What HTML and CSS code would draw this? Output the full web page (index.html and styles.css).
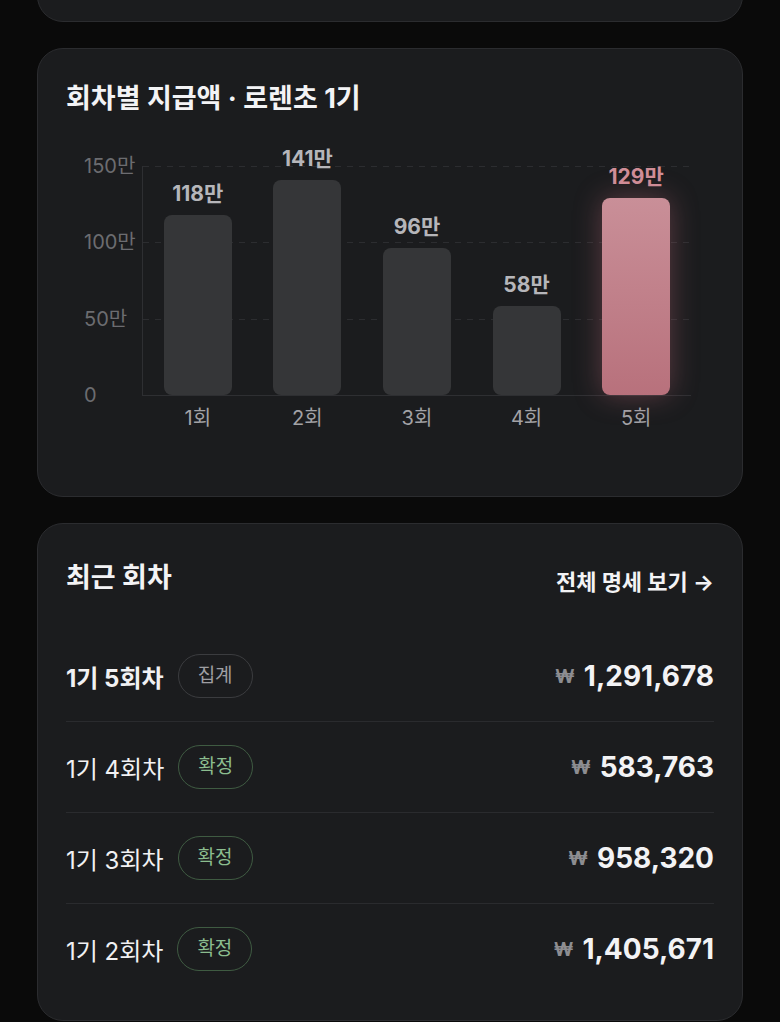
FILE: index.html
```html
<!DOCTYPE html>
<html lang="ko">
<head>
    <meta charset="UTF-8">
    <meta name="viewport" content="width=device-width, initial-scale=1.0">
    <title>정산 요약</title>
    <link rel="stylesheet" href="styles.css">
</head>

<body>
    <div class="page">
        <!-- previous card, scrolled mostly out of view -->
        <div class="card stub"></div>

        <!-- Chart: amount per round -->
        <div class="card chart-card">
            <h2 class="card-title">회차별 지급액 · 로렌초 1기</h2>

            <div class="chart-body">
                <div class="y-axis">
                    <span>150만</span>
                    <span>100만</span>
                    <span>50만</span>
                    <span>0</span>
                </div>
                <div class="plot">
                    <div class="gridline" style="top:0"></div>
                    <div class="gridline" style="top:33.33%"></div>
                    <div class="gridline" style="top:66.67%"></div>

                    <div class="slot">
                        <span class="bar-value">118만</span>
                        <div class="bar" style="height:180px"></div>
                    </div>
                    <div class="slot">
                        <span class="bar-value">141만</span>
                        <div class="bar" style="height:215px"></div>
                    </div>
                    <div class="slot">
                        <span class="bar-value">96만</span>
                        <div class="bar" style="height:147px"></div>
                    </div>
                    <div class="slot">
                        <span class="bar-value">58만</span>
                        <div class="bar" style="height:89px"></div>
                    </div>
                    <div class="slot current">
                        <span class="bar-value">129만</span>
                        <div class="bar" style="height:197px"></div>
                    </div>
                </div>
            </div>

            <div class="x-axis">
                <span>1회</span>
                <span>2회</span>
                <span>3회</span>
                <span>4회</span>
                <span>5회</span>
            </div>
        </div>

        <!-- Recent rounds list -->
        <div class="card recent-card">
            <div class="card-head">
                <h2 class="card-title">최근 회차</h2>
                <a href="#" class="more-link">전체 명세 보기 →</a>
            </div>

            <ul class="round-list">
                <li class="round-row current">
                    <div class="round-name">
                        <span>1기 5회차</span>
                        <span class="badge pending">집계</span>
                    </div>
                    <div class="amount"><span class="won">₩</span>1,291,678</div>
                </li>
                <li class="round-row">
                    <div class="round-name">
                        <span>1기 4회차</span>
                        <span class="badge done">확정</span>
                    </div>
                    <div class="amount"><span class="won">₩</span>583,763</div>
                </li>
                <li class="round-row">
                    <div class="round-name">
                        <span>1기 3회차</span>
                        <span class="badge done">확정</span>
                    </div>
                    <div class="amount"><span class="won">₩</span>958,320</div>
                </li>
                <li class="round-row">
                    <div class="round-name">
                        <span>1기 2회차</span>
                        <span class="badge done">확정</span>
                    </div>
                    <div class="amount"><span class="won">₩</span>1,405,671</div>
                </li>
            </ul>
        </div>
    </div>
</body>
</html>
```

FILE: styles.css
```css
body {
    margin: 0;
    background-color: #0a0a0a;
    color: #f1f1f3;
    font-family: Inter, "Noto Sans CJK KR", sans-serif;
}
.page {
    display: flex;
    flex-direction: column;
    gap: 26px;
    padding: 0 37px;
}
.card {
    background-color: #1b1c1e;
    border: 1px solid #2b2c2f;
    border-radius: 26px;
    padding: 32px 28px;
}
.stub {
    height: 200px;
    box-sizing: border-box;
    margin-top: -178px;
}
.card-title {
    margin: 0;
    font-size: 27px;
    line-height: 36px;
    font-weight: 700;
    color: #f3f3f5;
}

/* chart */
.chart-card {
    padding-bottom: 67px;
}
.chart-body {
    display: flex;
    align-items: flex-start;
    margin-top: 49px;
}
.y-axis {
    width: 76px;
    height: 249px;
    margin: -10px 0;
    box-sizing: border-box;
    padding-left: 18px;
    display: flex;
    flex-direction: column;
    justify-content: space-between;
    font-size: 20px;
    line-height: 20px;
    color: #6c6c70;
}
.plot {
    position: relative;
    width: 548px;
    height: 229px;
    border-left: 1px solid #2e2f32;
    border-bottom: 1px solid #2e2f32;
    display: flex;
}
.gridline {
    position: absolute;
    left: 0;
    right: 0;
    height: 1px;
    background: repeating-linear-gradient(to right, #2c2d30 0 6px, transparent 6px 12px);
}
.slot {
    position: relative;
    z-index: 1;
    flex: 1;
    display: flex;
    flex-direction: column;
    justify-content: flex-end;
    align-items: center;
}
.bar-value {
    flex-shrink: 0;
    font-size: 21px;
    line-height: 24px;
    font-weight: 700;
    color: #b6b6ba;
    margin-bottom: 9px;
}
.bar {
    flex-shrink: 0;
    width: 68px;
    background-color: #353638;
    border-radius: 8px;
}
.slot.current .bar-value {
    color: #d08e98;
}
.slot.current .bar {
    background: linear-gradient(to bottom, #c98f98, #b8717c);
    box-shadow: 0 0 28px rgba(201, 110, 126, 0.38);
}
.x-axis {
    display: flex;
    width: 548px;
    margin-left: 77px;
    margin-top: 11px;
    font-size: 20px;
    line-height: 22px;
    color: #a2a2a6;
}
.x-axis span {
    flex: 1;
    text-align: center;
}

/* recent rounds */
.recent-card {
    padding-bottom: 26px;
}
.card-head {
    display: flex;
    justify-content: space-between;
    align-items: center;
    height: 44px;
}
.more-link {
    color: #f3f3f5;
    text-decoration: none;
    font-size: 22px;
    font-weight: 700;
    padding-top: 4px;
}
.round-list {
    list-style: none;
    margin: 31px 0 0;
    padding: 0;
}
.round-row {
    display: flex;
    justify-content: space-between;
    align-items: center;
    height: 90px;
    border-bottom: 1px solid #2a2b2e;
}
.round-row:last-child {
    border-bottom: none;
}
.round-name {
    display: flex;
    align-items: center;
    gap: 14px;
    font-size: 24px;
    color: #f1f1f3;
}
.round-row.current .round-name {
    font-weight: 700;
}
.badge {
    font-size: 19px;
    line-height: 24px;
    padding: 9px 19px;
    border-radius: 22px;
    border: 1px solid #3a3b3e;
    font-weight: 400;
}
.badge.pending {
    color: #9e9ea2;
    border-color: #3b3c3f;
}
.badge.done {
    color: #8bbd8e;
    border-color: #3f5b42;
}
.amount {
    font-size: 28px;
    font-weight: 700;
    color: #f3f3f5;
    display: flex;
    align-items: center;
}
.won {
    font-size: 19px;
    color: #8d8d91;
    margin-right: 9px;
}
```
